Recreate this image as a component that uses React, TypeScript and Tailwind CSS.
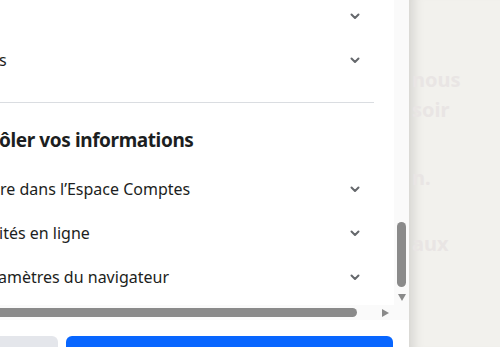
import React from "react";

const Chevron = () => (
  <svg width="10" height="7" viewBox="0 0 10 7" className="shrink-0">
    <polyline
      points="1.5,1.5 5,5 8.5,1.5"
      fill="none"
      stroke="#65686c"
      strokeWidth="2"
      strokeLinecap="round"
      strokeLinejoin="round"
    />
  </svg>
);

const Row = ({ label, offset }: { label: string; offset?: string }) => (
  <div className="flex h-[44px] items-center justify-between pr-[14px]">
    <span className={`whitespace-nowrap text-[16px] text-[#1c1e21] ${offset ?? ""}`}>{label}</span>
    <Chevron />
  </div>
);

export default function App() {
  return (
    <div
      className="flex h-[347px] w-[500px] overflow-hidden bg-[#f2f1ed]"
      style={{ fontFamily: '"Noto Sans", "Open Sans", Arial, sans-serif' }}
    >
      {/* dialog */}
      <div className="relative z-10 flex w-[409px] shrink-0 flex-col bg-white">
        <div className="flex h-[320px] shrink-0">
          <div className="flex w-[394px] flex-col">
            <div className="h-[305px] overflow-hidden">
              <div className="-mt-[6px] flex flex-col pr-[20px]">
                <Row label="" />
                <Row label="s" offset="-ml-[1px]" />
                <div className="mt-[20px] h-px bg-[#dadde1]" />
                <h2 className="-ml-[1px] pt-[25px] text-[19px] leading-[24px] font-bold tracking-[-0.4px] whitespace-nowrap text-[#1c1e21]">
                  ôler vos informations
                </h2>
                <div className="mt-[15px] flex flex-col">
                  <Row label="re dans l’Espace Comptes" />
                  <Row label="ités en ligne" offset="-ml-[1px]" />
                  <Row label="amètres du navigateur" offset="-ml-[2px]" />
                </div>
              </div>
            </div>
            {/* horizontal scrollbar */}
            <div className="flex h-[15px] items-center bg-[#fafafa]">
              <div className="h-[9px] w-[357px] rounded-r-full bg-[#8a8a8a]" />
              <div className="ml-[25px] h-0 w-0 border-y-[4px] border-l-[7px] border-y-transparent border-l-[#8a8a8a]" />
            </div>
          </div>
          {/* vertical scrollbar */}
          <div className="flex w-[15px] flex-col items-center bg-[#fafafa]">
            <div className="mt-[222px] h-[65px] w-[9px] rounded-full bg-[#8a8a8a]" />
            <div className="mt-[7px] h-0 w-0 border-x-[4px] border-t-[7px] border-x-transparent border-t-[#8a8a8a]" />
          </div>
        </div>
        <div className="h-px bg-[#e4e6eb]" />
        <div className="flex gap-[8px] pt-[16px] pr-[16px]">
          <div className="h-[36px] w-[58px] rounded-r-md bg-[#e4e6eb]" />
          <div className="h-[36px] flex-1 rounded-md bg-[#0866ff]" />
        </div>
      </div>

      {/* page behind */}
      <div className="flex flex-1 flex-col pl-[3px] text-[20px] leading-[24px] font-bold text-[#e9e5e4] shadow-[inset_14px_0_12px_-10px_rgba(0,0,0,0.13)]">
        <span className="mt-[68px]">nous</span>
        <span className="mt-[6px]">soir</span>
        <span className="mt-[44px]">n.</span>
        <span className="mt-[42px]">aux</span>
      </div>
    </div>
  );
}
